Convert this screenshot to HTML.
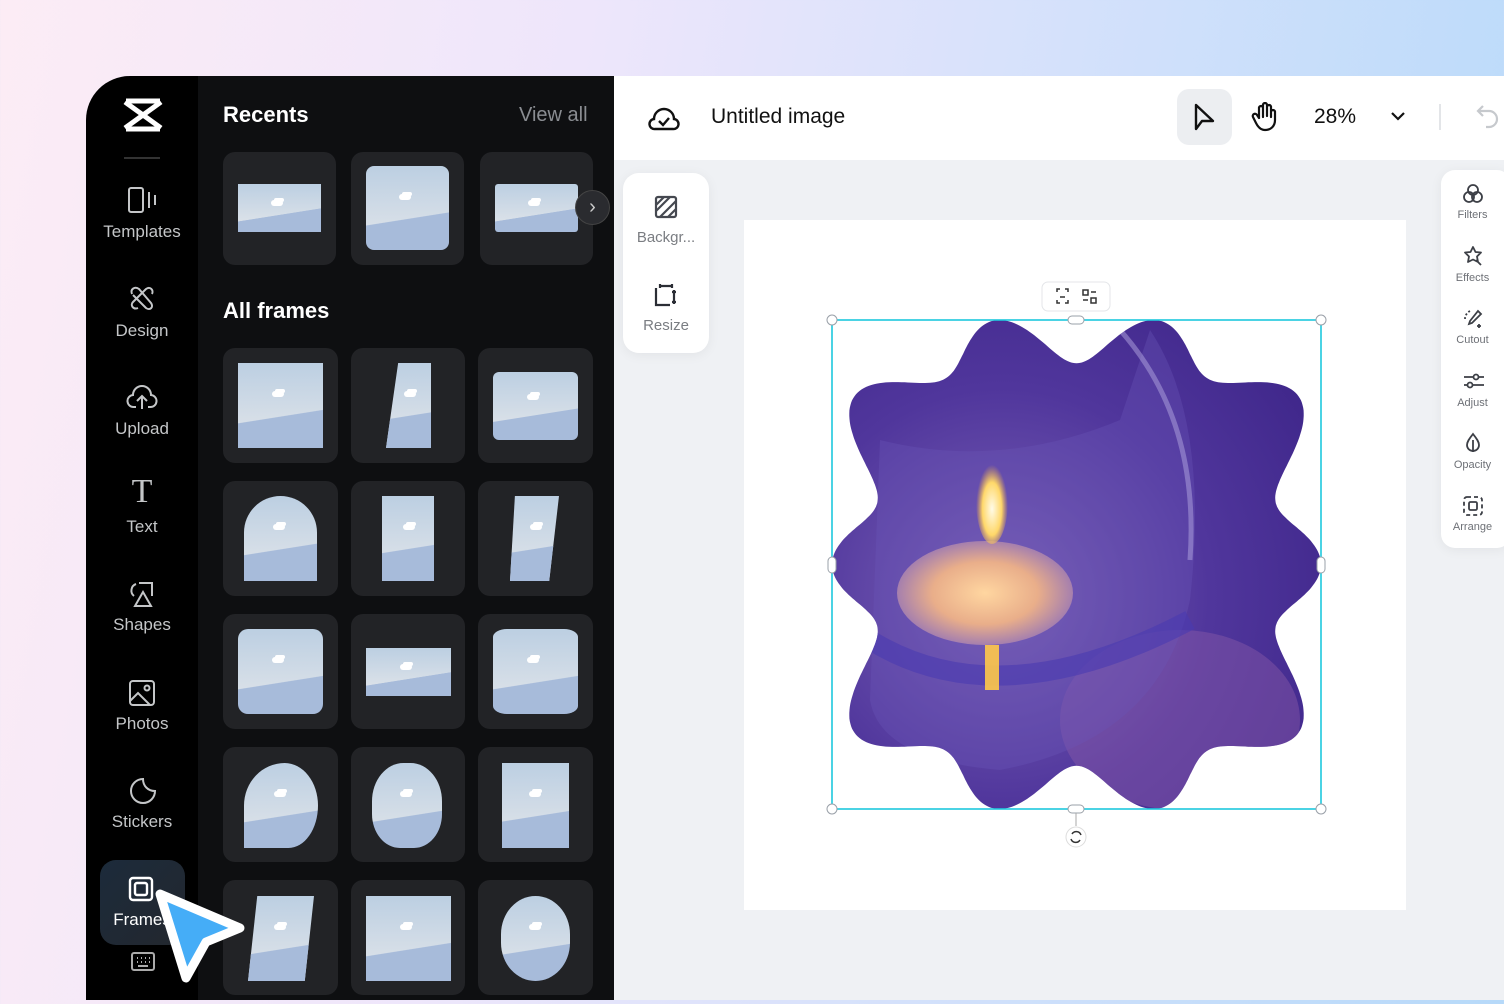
<!DOCTYPE html>
<html><head><meta charset="utf-8">
<style>
*{margin:0;padding:0;box-sizing:border-box}
html,body{width:1504px;height:1004px;overflow:hidden}
body{position:relative;font-family:"Liberation Sans",sans-serif;background:linear-gradient(100deg,#fcecf5 0%,#eee6fb 35%,#cfe0fb 70%,#b6d9f9 100%)}
.a{position:absolute}
#win{left:86px;top:76px;width:1418px;height:924px;border-top-left-radius:44px;overflow:hidden;background:#eff1f4}
.side{left:0;top:0;width:112px;height:924px;background:#000}
.panel{left:112px;top:0;width:416px;height:924px;background:#0e0f11}
.card{position:absolute;background:#222326;border-radius:12px}
.th{position:absolute;background:linear-gradient(171deg,rgba(0,0,0,0) 61%,#a7bbda 61.6%),linear-gradient(#bccfe2,#e3e6ea);overflow:hidden}
.th::before{content:"";position:absolute;left:40%;top:33%;width:12px;height:6px;background:#fff;border-radius:6px;box-shadow:2px -3px 0 -1px #fff}
.lab{position:absolute;width:112px;text-align:center;color:#c4c6c8;font-size:17px;left:0}
.ic{position:absolute}
.gl{position:absolute;width:86px;text-align:center;color:#7a7d82;font-size:15px;left:0}
.rl{position:absolute;width:63px;text-align:center;color:#6d7076;font-size:11px;left:0}
</style></head><body>
<div id="win" class="a">
  <div class="a side">
    <svg class="ic" style="left:36px;top:22px" width="42" height="34" viewBox="0 0 42 34"><path d="M3 4 L39 30 M39 4 L3 30" stroke="#fff" stroke-width="5" fill="none"/><path d="M4 3 H38 M4 31 H38" stroke="#fff" stroke-width="5"/></svg>
    <div class="a" style="left:38px;top:81px;width:36px;height:2px;background:#333"></div>
    <svg class="ic" style="left:42px;top:110px" width="30" height="28" viewBox="0 0 30 28" fill="none" stroke="#c4c6c8" stroke-width="2"><rect x="1" y="2" width="14" height="24" rx="2"/><path d="M21 6v16M27 9v10"/></svg>
    <div class="lab" style="top:146px">Templates</div>
    <svg class="ic" style="left:42px;top:208px" width="28" height="28" viewBox="0 0 28 28" fill="none" stroke="#c4c6c8" stroke-width="2"><path d="M4 10c-2-5 3-8 7-5l12 14c3 4-1 8-5 5L5 11M10 24c-5 2-8-3-5-6l13-13c4-3 8 1 6 5"/></svg>
    <div class="lab" style="top:245px">Design</div>
    <svg class="ic" style="left:40px;top:307px" width="32" height="28" viewBox="0 0 32 28" fill="none" stroke="#c4c6c8" stroke-width="2"><path d="M10 24H8a6 6 0 0 1-1-12 9 9 0 0 1 18 0 6 6 0 0 1-1 12h-2M16 26V14M11 18l5-5 5 5"/></svg>
    <div class="lab" style="top:343px">Upload</div>
    <div class="a" style="left:0;top:398px;width:112px;text-align:center;color:#c4c6c8;font-size:34px;font-family:'Liberation Serif',serif;line-height:36px">T</div>
    <div class="lab" style="top:441px">Text</div>
    <svg class="ic" style="left:41px;top:503px" width="30" height="30" viewBox="0 0 30 30" fill="none" stroke="#c4c6c8" stroke-width="2"><path d="M9 5a7 7 0 0 0-2 12M12 4h13v13M16 13l-8 14h16z"/></svg>
    <div class="lab" style="top:539px">Shapes</div>
    <svg class="ic" style="left:42px;top:603px" width="28" height="28" viewBox="0 0 28 28" fill="none" stroke="#c4c6c8" stroke-width="2"><rect x="2" y="2" width="24" height="24" rx="3"/><path d="M2 22l8-8 12 12"/><circle cx="19" cy="9" r="2.5"/></svg>
    <div class="lab" style="top:638px">Photos</div>
    <svg class="ic" style="left:42px;top:700px" width="30" height="30" viewBox="0 0 30 30" fill="none" stroke="#c4c6c8" stroke-width="2"><path d="M27 15A12 12 0 1 1 15 3c0 7 5 12 12 12z"/></svg>
    <div class="lab" style="top:736px">Stickers</div>
    <div class="a" style="left:14px;top:784px;width:85px;height:85px;border-radius:16px;background:linear-gradient(135deg,#1c2b3b,#23272e)"></div>
    <svg class="ic" style="left:42px;top:800px" width="28" height="28" viewBox="0 0 28 28" fill="none" stroke="#fff" stroke-width="2.4"><rect x="2" y="2" width="22" height="22" rx="3"/><rect x="7" y="7" width="12" height="12" rx="2"/></svg>
    <div class="lab" style="top:834px;color:#fff">Frames</div>
    <svg class="ic" style="left:45px;top:876px" width="24" height="20" viewBox="0 0 24 20" fill="none" stroke="#aaa" stroke-width="2"><rect x="1" y="1" width="22" height="17" rx="2"/><path d="M6 6h1M10 6h1M14 6h1M18 6h1M6 10h1M10 10h1M14 10h1M18 10h1M7 14h10"/></svg>
  </div>
  <div class="a panel">
    <div class="a" style="left:25px;top:26px;color:#fff;font-size:22px;font-weight:bold">Recents</div>
    <div class="a" style="left:321px;top:28px;color:#8a8d92;font-size:20px">View all</div>
    <div class="a" style="left:25px;top:222px;color:#fff;font-size:22px;font-weight:bold">All frames</div>
  </div>
</div>
<div class="card" style="left:223px;top:152px;width:113px;height:113px"></div>
<div class="card" style="left:351px;top:152px;width:113px;height:113px"></div>
<div class="card" style="left:480px;top:152px;width:113px;height:113px"></div>
<div class="th" style="left:238px;top:184px;width:83px;height:48px"></div>
<div class="th" style="left:366px;top:166px;width:83px;height:84px;border-radius:8px"></div>
<div class="th" style="left:495px;top:184px;width:83px;height:48px;border-radius:3px"></div>
<div class="a" style="left:575px;top:190px;width:35px;height:35px;border-radius:50%;background:#2a2b2f;border:1px solid #444;color:#ccc;font-size:20px;text-align:center;line-height:32px">›</div>
<div class="card" style="left:223px;top:348px;width:115px;height:115px"></div>
<div class="card" style="left:351px;top:348px;width:114px;height:115px"></div>
<div class="card" style="left:478px;top:348px;width:115px;height:115px"></div>
<div class="card" style="left:223px;top:481px;width:115px;height:115px"></div>
<div class="card" style="left:351px;top:481px;width:114px;height:115px"></div>
<div class="card" style="left:478px;top:481px;width:115px;height:115px"></div>
<div class="card" style="left:223px;top:614px;width:115px;height:115px"></div>
<div class="card" style="left:351px;top:614px;width:114px;height:115px"></div>
<div class="card" style="left:478px;top:614px;width:115px;height:115px"></div>
<div class="card" style="left:223px;top:747px;width:115px;height:115px"></div>
<div class="card" style="left:351px;top:747px;width:114px;height:115px"></div>
<div class="card" style="left:478px;top:747px;width:115px;height:115px"></div>
<div class="card" style="left:223px;top:880px;width:115px;height:115px"></div>
<div class="card" style="left:351px;top:880px;width:114px;height:115px"></div>
<div class="card" style="left:478px;top:880px;width:115px;height:115px"></div>

<div class="th" style="left:238px;top:363px;width:85px;height:85px"></div>
<div class="th" style="left:386px;top:363px;width:45px;height:85px;clip-path:polygon(27% 0,100% 0,100% 100%,0 100%)"></div>
<div class="th" style="left:493px;top:372px;width:85px;height:68px;border-radius:6px"></div>
<div class="th" style="left:244px;top:496px;width:73px;height:85px;border-radius:37px 37px 0 0"></div>
<div class="th" style="left:382px;top:496px;width:52px;height:85px"></div>
<div class="th" style="left:510px;top:496px;width:49px;height:85px;clip-path:polygon(10% 0,100% 0,80% 100%,0 100%)"></div>
<div class="th" style="left:238px;top:629px;width:85px;height:85px;border-radius:10px"></div>
<div class="th" style="left:366px;top:648px;width:85px;height:48px"></div>
<div class="th" style="left:493px;top:629px;width:85px;height:85px;border-radius:14px/8px"></div>
<div class="th" style="left:244px;top:763px;width:74px;height:85px;border-radius:55% 45% 40% 0/50% 50% 50% 0"></div>
<div class="th" style="left:372px;top:763px;width:70px;height:85px;border-radius:45% 45% 40% 40%"></div>
<div class="th" style="left:502px;top:763px;width:67px;height:85px"></div>
<div class="th" style="left:248px;top:896px;width:66px;height:85px;clip-path:polygon(14% 0,100% 0,86% 100%,0 100%)"></div>
<div class="th" style="left:366px;top:896px;width:85px;height:85px"></div>
<div class="th" style="left:501px;top:896px;width:69px;height:85px;border-radius:50%/45%"></div>

<svg class="a" style="left:148px;top:882px" width="104" height="110" viewBox="0 0 104 110"><path d="M12 12 L92 46 L58 60 L38 96 Z" fill="#45adf7" stroke="#fff" stroke-width="9" stroke-linejoin="round"/></svg>

<div class="a" style="left:614px;top:76px;width:890px;height:84px;background:#fff"></div>
<svg class="a" style="left:648px;top:102px" width="32" height="30" viewBox="0 0 32 30" fill="none" stroke="#111" stroke-width="2.4"><path d="M9 27H7a5 5 0 0 1-1-10 10 10 0 0 1 20 0 5 5 0 0 1-1 10z"/><path d="M11 19l4 4 6-7"/></svg>
<div class="a" style="left:711px;top:105px;font-size:21px;color:#111">Untitled image</div>
<div class="a" style="left:1177px;top:89px;width:55px;height:56px;border-radius:12px;background:#eceef1"></div>
<svg class="a" style="left:1193px;top:103px" width="24" height="28" viewBox="0 0 24 28" fill="none" stroke="#111" stroke-width="2.4" stroke-linejoin="round"><path d="M3 2v24l6-8h11z"/></svg>
<svg class="a" style="left:1251px;top:102px" width="26" height="30" viewBox="0 0 26 30" fill="none" stroke="#111" stroke-width="2.2" stroke-linecap="round"><path d="M8 16V6a2 2 0 0 1 4 0v9M12 14V3a2 2 0 0 1 4 0v11M16 14V5a2 2 0 0 1 4 0v10M20 10a2 2 0 0 1 4 0v8c0 6-4 10-10 10-4 0-7-3-9-7l-3-6a2 2 0 0 1 4-2l2 3"/></svg>
<div class="a" style="left:1314px;top:105px;font-size:21px;color:#111">28%</div>
<svg class="a" style="left:1390px;top:110px" width="16" height="12" viewBox="0 0 16 12" fill="none" stroke="#111" stroke-width="2.2"><path d="M2 3l6 6 6-6"/></svg>
<div class="a" style="left:1439px;top:104px;width:2px;height:26px;background:#e3e5e8"></div>
<svg class="a" style="left:1476px;top:104px" width="24" height="26" viewBox="0 0 24 26" fill="none" stroke="#c6c9cd" stroke-width="2.2"><path d="M7 2L2 7l5 5M2 7h11a8 8 0 0 1 0 16h-3"/></svg>

<div class="a" style="left:623px;top:173px;width:86px;height:180px;background:#fff;border-radius:16px;box-shadow:0 2px 12px rgba(0,0,0,.06)"></div>
<svg class="a" style="left:654px;top:195px" width="24" height="24" viewBox="0 0 24 24" fill="none" stroke="#454850" stroke-width="2.2"><rect x="2" y="2" width="20" height="20" rx="2"/><path d="M2 16L16 2M6 22L22 6M2 10l8-8M14 22l8-8"/></svg>
<div class="gl" style="left:623px;top:229px">Backgr...</div>
<svg class="a" style="left:653px;top:282px" width="26" height="26" viewBox="0 0 26 26" fill="none" stroke="#2b2e35" stroke-width="2.2"><path d="M3 6v17h14M7 4h12M7 2v4M19 2v4M21 8v14M19 10h4M19 20h4"/></svg>
<div class="gl" style="left:623px;top:317px">Resize</div>

<div class="a" style="left:744px;top:220px;width:662px;height:690px;background:#fff"></div>

<div class="a" style="left:1441px;top:170px;width:70px;height:378px;background:#fff;border-radius:14px;box-shadow:0 2px 12px rgba(0,0,0,.06)"></div>
<div style="position:absolute;left:1441px;top:0">
<svg class="a" style="left:21px;top:183px" width="22" height="22" viewBox="0 0 22 22" fill="none" stroke="#3c3f46" stroke-width="1.8"><circle cx="11" cy="7" r="5"/><circle cx="7" cy="14" r="5"/><circle cx="15" cy="14" r="5"/></svg>
<div class="rl" style="top:209px">Filters</div>
<svg class="a" style="left:21px;top:245px" width="22" height="22" viewBox="0 0 22 22" fill="none" stroke="#3c3f46" stroke-width="1.8" stroke-linejoin="round"><path d="M11 2l2.5 5 5.5.5-4 4 1 5.5-5-2.5-5 2.5 1-5.5-4-4 5.5-.5zM14 15l5 5"/></svg>
<div class="rl" style="top:272px">Effects</div>
<svg class="a" style="left:21px;top:308px" width="22" height="22" viewBox="0 0 22 22" fill="none" stroke="#3c3f46" stroke-width="1.8"><path d="M8 3a9 9 0 0 0-5 8" stroke-dasharray="2 2"/><path d="M16 3l3 3-9 9-3 1 1-3zM17 16v4M15 18h4"/></svg>
<div class="rl" style="top:334px">Cutout</div>
<svg class="a" style="left:21px;top:370px" width="22" height="22" viewBox="0 0 22 22" fill="none" stroke="#3c3f46" stroke-width="1.8"><path d="M2 7h20M2 15h20"/><circle cx="14" cy="7" r="2.5" fill="#fff"/><circle cx="8" cy="15" r="2.5" fill="#fff"/></svg>
<div class="rl" style="top:397px">Adjust</div>
<svg class="a" style="left:22px;top:432px" width="20" height="22" viewBox="0 0 20 22" fill="none" stroke="#3c3f46" stroke-width="1.8"><path d="M10 2C6 7 4 10 4 13a6 6 0 0 0 12 0c0-3-2-6-6-11z"/><path d="M10 8v12" /></svg>
<div class="rl" style="top:459px">Opacity</div>
<svg class="a" style="left:21px;top:495px" width="22" height="22" viewBox="0 0 22 22" fill="none" stroke="#3c3f46" stroke-width="1.8"><rect x="2" y="2" width="18" height="18" rx="3" stroke-dasharray="4 3"/><rect x="7" y="7" width="8" height="8" rx="1.5"/></svg>
<div class="rl" style="top:521px">Arrange</div>
</div>

<svg class="a" style="left:0;top:0" width="1504" height="1004" viewBox="0 0 1504 1004">
<defs>
<clipPath id="cp"><path id="wave" d=""/></clipPath>
<radialGradient id="bg" cx="0.35" cy="0.55" r="0.8"><stop offset="0" stop-color="#7d64b8"/><stop offset="0.5" stop-color="#50369c"/><stop offset="1" stop-color="#3a2285"/></radialGradient>
<radialGradient id="cd" cx="0.5" cy="0.5" r="0.5"><stop offset="0" stop-color="#ffd6a0"/><stop offset="0.6" stop-color="#e9ae8a"/><stop offset="1" stop-color="#a57fae"/></radialGradient>
<radialGradient id="fl" cx="0.5" cy="0.6" r="0.5"><stop offset="0" stop-color="#fffbe8"/><stop offset="0.6" stop-color="#ffd86a"/><stop offset="1" stop-color="#f7b23f" stop-opacity="0"/></radialGradient>
</defs>
<g clip-path="url(#cp)">
<rect x="820" y="310" width="520" height="520" fill="url(#bg)"/>
<ellipse cx="1180" cy="720" rx="120" ry="90" fill="#8a5aa8" opacity=".45"/>
<path d="M880 440 Q1000 470 1120 420 L1150 330 Q1210 420 1190 600 Q1160 740 1000 770 Q880 760 870 700 Z" fill="#6a56b8" opacity=".35"/>
<path d="M870 640 Q1000 720 1190 620" stroke="#4a3ab0" stroke-width="20" fill="none" opacity=".6"/>
<ellipse cx="985" cy="593" rx="88" ry="52" fill="url(#cd)"/>
<ellipse cx="992" cy="500" rx="16" ry="44" fill="url(#fl)"/>
<rect x="985" y="645" width="14" height="45" fill="#ffc94a" opacity=".9"/>
<path d="M1120 330 Q1200 420 1190 560" stroke="#b2a6e0" stroke-width="5" fill="none" opacity=".5"/>
</g>
<rect x="832" y="320" width="489" height="489" fill="none" stroke="#1ec8de" stroke-width="1.6"/>
<g fill="#fff" stroke="#9aa0a8" stroke-width="1">
<circle cx="832" cy="320" r="5"/><circle cx="1321" cy="320" r="5"/><circle cx="832" cy="809" r="5"/><circle cx="1321" cy="809" r="5"/>
<rect x="1068" y="316" width="16" height="8" rx="4"/><rect x="1068" y="805" width="16" height="8" rx="4"/>
<rect x="828" y="557" width="8" height="16" rx="4"/><rect x="1317" y="557" width="8" height="16" rx="4"/>
</g>
<line x1="1076" y1="813" x2="1076" y2="826" stroke="#aaa"/>
<circle cx="1076" cy="837" r="10" fill="#fff" stroke="#ddd"/>
<path d="M1072 834a5 5 0 0 1 9 1M1080 840a5 5 0 0 1-9-1" stroke="#333" stroke-width="1.5" fill="none"/>
<rect x="1042" y="282" width="68" height="29" rx="6" fill="#fff" stroke="#e4e6e9"/>
<g stroke="#333" stroke-width="1.5" fill="none"><path d="M1057 292v-3h3M1068 292v-3h-3M1057 300v3h3M1068 300v3h-3M1060 297h5"/><rect x="1083" y="290" width="5" height="5"/><rect x="1091" y="298" width="5" height="5"/><path d="M1091 292h5M1083 300h5"/></g>
</svg>
<script>
(function(){
var cx=1076.5,cy=564.5,pts=[],N=720,p=3.4,A=0.1,mx=0,my=0;
for(var i=0;i<N;i++){var t=i/N*2*Math.PI,c=Math.cos(t),s=Math.sin(t);
var rb=1/Math.pow(Math.pow(Math.abs(c),p)+Math.pow(Math.abs(s),p),1/p);
var r=rb*(1+A*Math.cos(10*t));var x=r*c,y=r*s;pts.push([x,y]);mx=Math.max(mx,Math.abs(x));my=Math.max(my,Math.abs(y));}
var d="";for(var j=0;j<N;j++){var X=cx+pts[j][0]/mx*244.5,Y=cy+pts[j][1]/my*244.5;d+=(j?"L":"M")+X.toFixed(1)+" "+Y.toFixed(1);}
document.getElementById("wave").setAttribute("d",d+"Z");
})();
</script>
</body></html>
